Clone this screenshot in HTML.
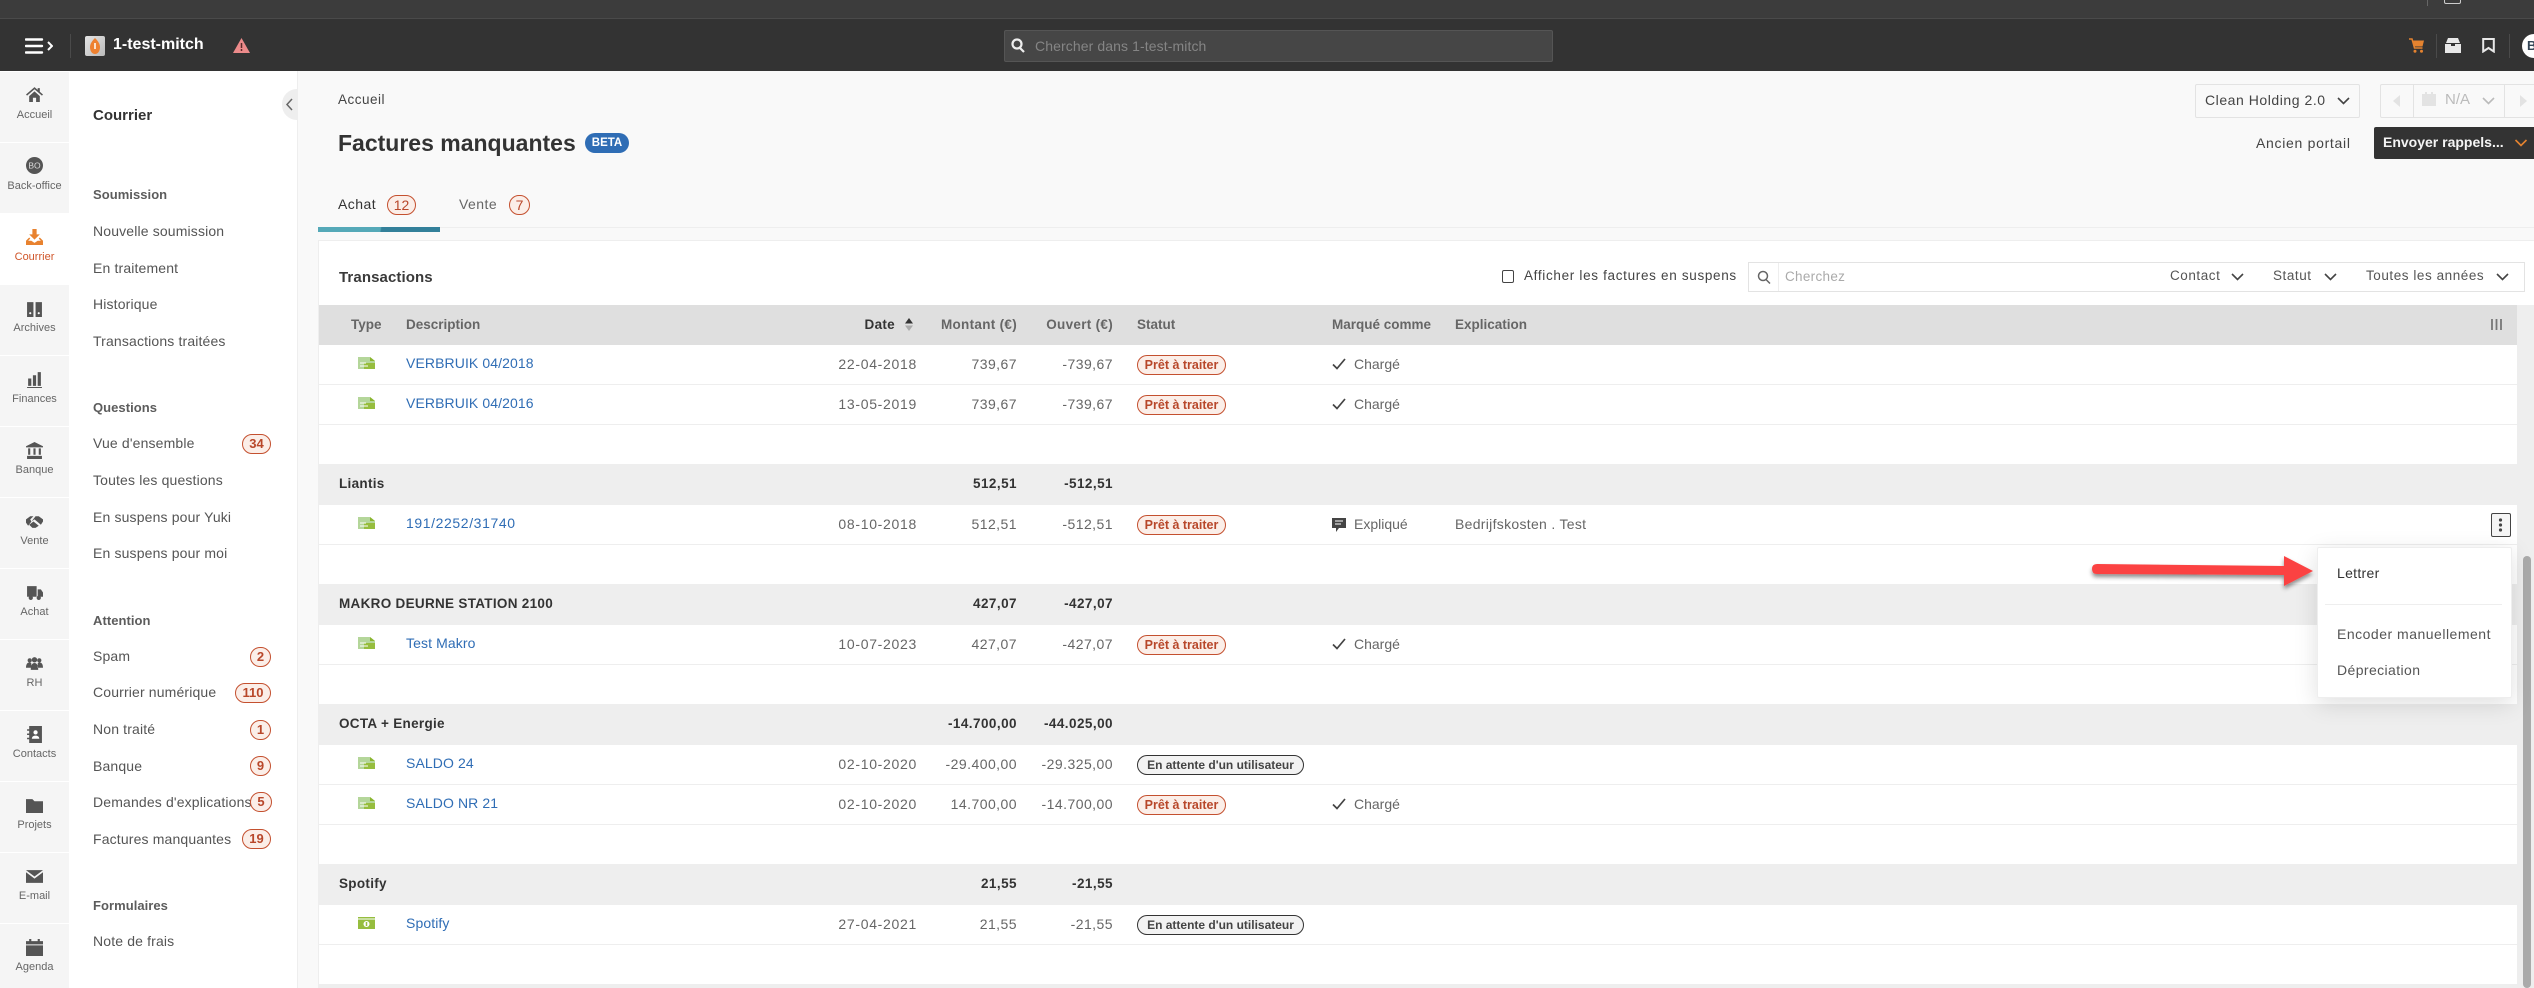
<!DOCTYPE html>
<html lang="fr"><head><meta charset="utf-8"><title>Factures manquantes</title>
<style>
html,body{margin:0;padding:0;width:2534px;height:988px;overflow:hidden;background:#f9f9f9}
body{position:relative;font-family:"Liberation Sans",sans-serif;font-size:14px;color:#555}
.a,.t,.r,.bd,svg{position:absolute}
.t,.r{white-space:nowrap;line-height:20px}
.r{text-align:right;width:160px}
.nav{position:absolute;left:0;width:69px;height:70px;background:#f5f5f5}
.nav span{position:absolute;left:0;width:69px;top:33px;text-align:center;font-size:11px;line-height:20px;color:#666}
.nav svg{left:26px;top:15px;width:17px;height:17px;fill:#555}
.m{left:93px;font-size:14px;letter-spacing:.15px;color:#555}
.s{left:93px;font-size:13px;font-weight:bold;color:#5c5c5c;letter-spacing:.05px}
.bd{height:18px;line-height:18px;border:1px solid #c4502f;border-radius:10px;background:#fbeee8;color:#b8472a;font-weight:bold;font-size:13px;text-align:center}
.h{font-size:13.5px;font-weight:bold;color:#666}
.r.h{letter-spacing:.3px}
.d{font-size:14px;letter-spacing:.1px;color:#2f6db5;left:406px}
.n{font-size:14px;color:#666}
.r.n{letter-spacing:.45px}
.r.dt{letter-spacing:.7px}
.g{font-size:13.5px;font-weight:bold;color:#333;letter-spacing:.3px}
.r.g{letter-spacing:.45px}
.f{font-size:13.5px;color:#555;letter-spacing:.55px}
.row{position:absolute;left:319px;width:2198px;height:1px;background:#eee}
.grp{position:absolute;left:319px;width:2198px;height:41px;background:#eee}
.st{position:absolute;left:1137px;width:87px;height:18px;line-height:18px;border:1px solid #c4502f;border-radius:10px;background:#fbeee8;color:#b8472a;font-weight:bold;font-size:12.5px;text-align:center;white-space:nowrap}
.st2{width:165px;border-color:#333;background:#f2f2f2;color:#444;font-size:12px}
.ic{width:17px;height:12px;left:358px}
.ck{left:1332px;width:14px;height:12px;fill:none;stroke:#444;stroke-width:1.7}
.ch{fill:none;stroke:#444;stroke-width:1.6;width:13px;height:8px}
</style></head><body>

<!-- top bars -->
<div class="a" style="left:0;top:0;width:2534px;height:18px;background:#3c3c3c"></div>
<div class="a" style="left:0;top:18px;width:2534px;height:1px;background:#4a4a4a"></div>
<div class="a" style="left:0;top:19px;width:2534px;height:52px;background:#333"></div>
<div class="a" style="left:2427px;top:0;width:1px;height:6px;background:#666"></div>
<div class="a" style="left:2444px;top:-8px;width:15px;height:10px;border:1px solid #ccc;border-radius:2px"></div>
<div class="a" style="left:2468px;top:0;width:66px;height:4px;overflow:hidden"><div class="t" style="top:-15px;left:0;color:#ccc;font-size:12px">Air bookmarks</div></div>

<svg style="left:25px;top:38px;width:28px;height:16px" viewBox="0 0 28 16"><path d="M1 1.5h16M1 8h16M1 14.500h16" stroke="#fff" stroke-width="2.4" stroke-linecap="round" fill="none"/><path d="M23 4l4 4-4 4" stroke="#fff" stroke-width="2" fill="none"/></svg>
<div class="a" style="left:70px;top:34px;width:1px;height:24px;background:#4a4a4a"></div>
<div class="a" style="left:85px;top:36px;width:20px;height:20px;border-radius:2px;background:linear-gradient(135deg,#e4e4e4,#bbb)"></div>
<svg style="left:90px;top:38px;width:10px;height:16px" viewBox="0 0 10 16"><path d="M5 0C8 3 10 6 10 9c0 4-2 7-5 7S0 13 0 9c0-3 2-6 5-9z" fill="#ee8130"/><path d="M5 5v6" stroke="#fff" stroke-width="1.5"/></svg>
<div class="t" style="left:113px;top:35px;color:#fff;font-weight:bold;font-size:16px">1-test-mitch</div>
<svg style="left:233px;top:38px;width:17px;height:15px" viewBox="0 0 17 15"><path d="M8.500 0L17 15H0z" fill="#ec8a8a"/><path d="M8.500 5v5M8.500 11v2" stroke="#5a2b2b" stroke-width="1.500"/></svg>

<div class="a" style="left:1004px;top:30px;width:547px;height:30px;background:#464646;border:1px solid #555;border-radius:2px"></div>
<svg style="left:1011px;top:38px;width:14px;height:15px" viewBox="0 0 14 15"><circle cx="6" cy="6" r="4.500" fill="none" stroke="#eee" stroke-width="2.200"/><path d="M9 10l4 4" stroke="#eee" stroke-width="2.200"/></svg>
<div class="t" style="left:1035px;top:36px;color:#858585;font-size:14px;letter-spacing:.1px">Chercher dans 1-test-mitch</div>

<svg style="left:2409px;top:38px;width:15px;height:15px" viewBox="0 0 15 15"><path d="M0 1h3l2.500 9h8" stroke="#e5832f" stroke-width="1.500" fill="none"/><path d="M4 2.500h11l-1.500 6H5.500z" fill="#e5832f"/><circle cx="6" cy="13.300" r="1.500" fill="#e5832f"/><circle cx="12.500" cy="13.300" r="1.500" fill="#e5832f"/></svg>
<div class="a" style="left:2436px;top:34px;width:1px;height:24px;background:#4a4a4a"></div>
<svg style="left:2445px;top:38px;width:16px;height:15px" viewBox="0 0 16 15"><path d="M1 5L3 0h10l2 5z" fill="#e8e8e8"/><path d="M0 6h6v2h4V6h6v9H0z" fill="#e8e8e8"/></svg>
<svg style="left:2482px;top:38px;width:13px;height:15px" viewBox="0 0 13 15"><path d="M1.200 1h10.600v12.500L6.500 10l-5.300 3.500z" fill="none" stroke="#e8e8e8" stroke-width="2"/></svg>
<div class="a" style="left:2509px;top:34px;width:1px;height:24px;background:#4a4a4a"></div>
<div class="a" style="left:2522px;top:34px;width:24px;height:24px;border-radius:50%;background:#fff"></div>
<div class="t" style="left:2527px;top:36px;color:#345;font-weight:bold;font-size:13px">B</div>

<!-- rail -->
<div class="a" style="left:0;top:71px;width:297px;height:917px;background:#fff"></div>
<div class="a" style="left:297px;top:71px;width:1px;height:917px;background:#eee"></div>

<div class="nav" style="top:72px"><svg viewBox="0 0 16 16" style="top:14px"><path d="M8 1L0 8l1 1 7-6 7 6 1-1-3-2.600V2h-2v1.700z"/><path d="M3 9.500L8 5l5 4.500V15H9.500v-4h-3v4H3z"/></svg><span>Accueil</span></div>
<div class="nav" style="top:143px"><svg viewBox="0 0 16 16" style="top:14px"><circle cx="8" cy="8" r="8"/><text x="8" y="11" text-anchor="middle" font-size="8" fill="#ddd" font-family="Liberation Sans">BO</text></svg><span>Back-office</span></div>
<div class="nav" style="top:214px;background:#fff;height:71px"><svg viewBox="0 0 16 16" style="top:15px;fill:#e8822f"><path d="M6 0h4v5h3L8 10 3 5h3z"/><path d="M3 8L0 11v4h16v-4l-3-3-1 1 2 2h-3l-3 2-3-2H2l2-2z"/></svg><span style="color:#d0562a">Courrier</span></div>
<div class="nav" style="top:285px"><svg viewBox="0 0 16 16" style="top:16px"><path d="M1 1h6v14H1zM9 1h6v14H9z"/><circle cx="4" cy="11.500" r="1" fill="#fff"/><circle cx="12" cy="11.500" r="1" fill="#fff"/></svg><span>Archives</span></div>
<div class="nav" style="top:356px"><svg viewBox="0 0 16 16"><path d="M2 7h3v7H2zM6.500 4h3v10h-3zM11 1h3v13h-3zM1 15h14v1H1z"/></svg><span>Finances</span></div>
<div class="nav" style="top:427px"><svg viewBox="0 0 16 16"><path d="M8 0l8 4v1H0V4zM2 6h2v6H2zM7 6h2v6H7zM12 6h2v6h-2zM1 13h14v3H1z"/></svg><span>Banque</span></div>
<div class="nav" style="top:498px"><svg viewBox="0 0 16 16"><path d="M0 6l4-3h3L4 6l1 2 3-2 6 5 2-3V6l-4-3H9L2 12 0 9z"/><path d="M3 11l3 3h3l3-2-5-4z"/></svg><span>Vente</span></div>
<div class="nav" style="top:569px"><svg viewBox="0 0 16 16"><path d="M1 2h9v10H1zM11 5h3l2 3v4h-5z"/><circle cx="4.500" cy="13" r="2"/><circle cx="12" cy="13" r="2"/></svg><span>Achat</span></div>
<div class="nav" style="top:640px"><svg viewBox="0 0 16 16"><circle cx="3.500" cy="5" r="2"/><circle cx="12.500" cy="5" r="2"/><circle cx="8" cy="4.500" r="2.500"/><path d="M0 12c0-3 1-5 3-5s2 1 2 1v4zM16 12c0-3-1-5-3-5s-2 1-2 1v4zM4.500 14c0-4 1-6.500 3.500-6.500s3.500 2.500 3.500 6.500z"/></svg><span>RH</span></div>
<div class="nav" style="top:711px"><svg viewBox="0 0 16 16"><path d="M3 0h12v16H3z"/><path d="M1 3h3v1.500H1zM1 7h3v1.500H1zM1 11h3v1.500H1z"/><circle cx="9" cy="6" r="2" fill="#fff"/><path d="M5.500 12c0-2 1.500-3 3.500-3s3.500 1 3.500 3z" fill="#fff"/></svg><span>Contacts</span></div>
<div class="nav" style="top:782px"><svg viewBox="0 0 16 16" style="width:19px;left:25px"><path d="M0 2h6l2 2h8v11H0z"/></svg><span>Projets</span></div>
<div class="nav" style="top:853px"><svg viewBox="0 0 16 16" style="width:19px;left:25px"><path d="M0 2h16L8 8zM0 4l8 6 8-6v10H0z"/></svg><span>E-mail</span></div>
<div class="nav" style="top:924px;height:64px"><svg viewBox="0 0 16 16" style="width:19px;left:25px"><path d="M3 0h2v2h6V0h2v2h3v3H0V2h3zM0 6h16v10H0z"/></svg><span>Agenda</span></div>

<!-- second sidebar -->
<div class="a" style="left:282px;top:89px;width:15px;height:31px;background:#eee;border-radius:16px 0 0 16px"></div>
<svg style="left:285px;top:98px;width:9px;height:13px" viewBox="0 0 9 13"><path d="M7 1L2 6.500 7 12" fill="none" stroke="#666" stroke-width="1.500"/></svg>
<div class="t" style="left:93px;top:106px;font-size:15px;font-weight:bold;color:#333">Courrier</div>

<div class="t s" style="top:185px">Soumission</div>
<div class="t m" style="top:221px">Nouvelle soumission</div>
<div class="t m" style="top:258px">En traitement</div>
<div class="t m" style="top:294px">Historique</div>
<div class="t m" style="top:331px">Transactions traitées</div>
<div class="t s" style="top:398px">Questions</div>
<div class="t m" style="top:433px">Vue d'ensemble</div>
<div class="bd" style="left:242px;top:434px;width:27px">34</div>
<div class="t m" style="top:470px">Toutes les questions</div>
<div class="t m" style="top:507px">En suspens pour Yuki</div>
<div class="t m" style="top:543px">En suspens pour moi</div>
<div class="t s" style="top:611px">Attention</div>
<div class="t m" style="top:646px">Spam</div>
<div class="bd" style="left:250px;top:647px;width:19px">2</div>
<div class="t m" style="top:682px">Courrier numérique</div>
<div class="bd" style="left:235px;top:683px;width:34px">110</div>
<div class="t m" style="top:719px">Non traité</div>
<div class="bd" style="left:250px;top:720px;width:19px">1</div>
<div class="t m" style="top:756px">Banque</div>
<div class="bd" style="left:250px;top:756px;width:19px">9</div>
<div class="t m" style="top:792px">Demandes d'explications</div>
<div class="bd" style="left:250px;top:792px;width:20px">5</div>
<div class="t m" style="top:829px">Factures manquantes</div>
<div class="bd" style="left:242px;top:829px;width:27px">19</div>
<div class="t s" style="top:896px">Formulaires</div>
<div class="t m" style="top:931px">Note de frais</div>

<!-- page head -->
<div class="t" style="left:338px;top:90px;font-size:13.5px;letter-spacing:.5px;color:#444">Accueil</div>
<div class="t" style="left:338px;top:130px;font-size:23px;line-height:26px;font-weight:bold;color:#333">Factures manquantes</div>
<div class="a" style="left:585px;top:133px;width:44px;height:20px;line-height:20px;border-radius:10px;background:#2f6db5;color:#fff;font-weight:bold;font-size:11.500px;text-align:center">BETA</div>

<div class="t" style="left:338px;top:194px;font-size:14px;letter-spacing:.45px;color:#333">Achat</div>
<div class="bd" style="left:387px;top:195px;width:27px;font-weight:normal;font-size:14px">12</div>
<div class="t" style="left:459px;top:194px;font-size:14px;letter-spacing:.45px;color:#666">Vente</div>
<div class="bd" style="left:509px;top:195px;width:19px;font-weight:normal;font-size:14px">7</div>
<div class="a" style="left:318px;top:227px;width:2216px;height:1px;background:#eee"></div>
<div class="a" style="left:318px;top:227px;width:122px;height:5px;background:linear-gradient(100deg,#55a9b8 0,#55a9b8 51%,#33809a 52%)"></div>

<!-- top right -->
<div class="a" style="left:2195px;top:84px;width:163px;height:32px;border:1px solid #e3e3e3;border-radius:2px;background:#f9f9f9"></div>
<div class="t" style="left:2205px;top:90px;font-size:14px;letter-spacing:.55px;color:#444">Clean Holding 2.0</div>
<svg class="ch" style="left:2337px;top:97px" viewBox="0 0 13 8"><path d="M1 1l5.500 5.500L12 1"/></svg>
<div class="a" style="left:2380px;top:84px;width:160px;height:32px;border:1px solid #e3e3e3;border-radius:2px"></div>
<div class="a" style="left:2413px;top:84px;width:1px;height:33px;background:#e3e3e3"></div>
<div class="a" style="left:2504px;top:84px;width:1px;height:33px;background:#e3e3e3"></div>
<svg style="left:2393px;top:95px;width:8px;height:12px" viewBox="0 0 8 12"><path d="M7 0v12L0 6z" fill="#e3e3e3"/></svg>
<svg style="left:2519px;top:95px;width:8px;height:12px" viewBox="0 0 8 12"><path d="M1 0v12l7-6z" fill="#e3e3e3"/></svg>
<svg style="left:2422px;top:92px;width:14px;height:14px" viewBox="0 0 14 14"><path d="M0 2h14v12H0zM3 0h2v2H3zM9 0h2v2H9z" fill="#e3e3e3"/></svg>
<div class="t" style="left:2445px;top:90px;font-size:15px;color:#bbb">N/A</div>
<svg class="ch" style="left:2482px;top:97px;stroke:#bbb" viewBox="0 0 13 8"><path d="M1 1l5.500 5.500L12 1"/></svg>
<div class="t" style="left:2256px;top:133px;font-size:14px;letter-spacing:.7px;color:#444">Ancien portail</div>
<div class="a" style="left:2374px;top:127px;width:170px;height:32px;background:#333;border-radius:2px"></div>
<div class="t" style="left:2383px;top:132px;font-size:14px;font-weight:bold;color:#f5f5f5">Envoyer rappels...</div>
<svg class="ch" style="left:2514px;top:139px;stroke:#e5832f;width:14px" viewBox="0 0 13 8"><path d="M1 1l5.500 5.500L12 1"/></svg>

<!-- panel -->
<div class="a" style="left:318px;top:240px;width:2216px;height:748px;background:#fff;border-top:1px solid #eee;border-left:1px solid #eee;box-sizing:border-box"></div>
<div class="a" style="left:2517px;top:305px;width:17px;height:683px;background:#eee"></div>
<div class="a" style="left:2523px;top:556px;width:8px;height:432px;background:#aaa;border-radius:4px"></div>
<div class="t" style="left:339px;top:268px;font-size:15px;letter-spacing:.1px;font-weight:bold;color:#3a3a3a">Transactions</div>

<div class="a" style="left:1502px;top:270px;width:10px;height:11px;border:1.600px solid #444;border-radius:2px"></div>
<div class="t" style="left:1524px;top:266px;font-size:13.500px;letter-spacing:.68px;color:#444">Afficher les factures en suspens</div>
<div class="a" style="left:1748px;top:262px;width:775px;height:28px;border:1px solid #e3e3e3;background:#fff"></div>
<div class="a" style="left:1778px;top:263px;width:1px;height:28px;background:#eee"></div>
<svg style="left:1757px;top:270px;width:14px;height:14px" viewBox="0 0 14 14"><circle cx="6" cy="6" r="4.500" fill="none" stroke="#666" stroke-width="1.500"/><path d="M9 9.500l4 4" stroke="#666" stroke-width="1.500"/></svg>
<div class="t" style="left:1785px;top:267px;font-size:13.500px;letter-spacing:.3px;color:#aaa">Cherchez</div>
<div class="t f" style="left:2170px;top:266px">Contact</div>
<svg class="ch" style="left:2231px;top:273px" viewBox="0 0 13 8"><path d="M1 1l5.500 5.500L12 1"/></svg>
<div class="t f" style="left:2273px;top:266px">Statut</div>
<svg class="ch" style="left:2324px;top:273px" viewBox="0 0 13 8"><path d="M1 1l5.500 5.500L12 1"/></svg>
<div class="t f" style="left:2366px;top:266px">Toutes les années</div>
<svg class="ch" style="left:2496px;top:273px" viewBox="0 0 13 8"><path d="M1 1l5.500 5.500L12 1"/></svg>

<!-- table head -->
<div class="a" style="left:319px;top:305px;width:2198px;height:40px;background:#dfdfdf"></div>
<div class="t h" style="left:351px;top:315px">Type</div>
<div class="t h" style="left:406px;top:315px">Description</div>
<div class="r h" style="left:735px;top:315px;color:#333">Date</div>
<svg style="left:905px;top:318px;width:8px;height:13px" viewBox="0 0 8 13"><path d="M4 0l4 5.500H0z" fill="#333"/><path d="M4 13L0 7.500h8z" fill="#aaa"/></svg>
<div class="r h" style="left:857px;top:315px">Montant (€)</div>
<div class="r h" style="left:953px;top:315px">Ouvert (€)</div>
<div class="t h" style="left:1137px;top:315px">Statut</div>
<div class="t h" style="left:1332px;top:315px">Marqué comme</div>
<div class="t h" style="left:1455px;top:315px">Explication</div>
<svg style="left:2491px;top:319px;width:11px;height:11px" viewBox="0 0 11 11"><path d="M1 0v11M5.500 0v11M10 0v11" stroke="#777" stroke-width="1.800"/></svg>

<!-- rows -->
<svg class="ic" style="top:357px" viewBox="0 0 17 12"><path d="M0 0h12l5 4v8H0z" fill="#b4d69a"/><path d="M6 6h11v6H6z" fill="#96bd3e"/><path d="M12 0l5 4h-5z" fill="#8ab52f"/><path d="M2 6h6M2 9h8" stroke="#fff" stroke-width="1"/></svg>
<div class="t d" style="top:353px">VERBRUIK 04/2018</div>
<div class="r n dt" style="left:757px;top:354px">22-04-2018</div>
<div class="r n" style="left:857px;top:354px">739,67</div>
<div class="r n" style="left:953px;top:354px">-739,67</div>
<div class="st" style="top:355px">Prêt à traiter</div>
<svg class="ck" style="top:358px" viewBox="0 0 14 12"><path d="M1 6.500l4 4L13 1"/></svg>
<div class="t n" style="left:1354px;top:354px">Chargé</div>
<div class="row" style="top:384px"></div>

<svg class="ic" style="top:397px" viewBox="0 0 17 12"><path d="M0 0h12l5 4v8H0z" fill="#b4d69a"/><path d="M6 6h11v6H6z" fill="#96bd3e"/><path d="M12 0l5 4h-5z" fill="#8ab52f"/><path d="M2 6h6M2 9h8" stroke="#fff" stroke-width="1"/></svg>
<div class="t d" style="top:393px">VERBRUIK 04/2016</div>
<div class="r n dt" style="left:757px;top:394px">13-05-2019</div>
<div class="r n" style="left:857px;top:394px">739,67</div>
<div class="r n" style="left:953px;top:394px">-739,67</div>
<div class="st" style="top:395px">Prêt à traiter</div>
<svg class="ck" style="top:398px" viewBox="0 0 14 12"><path d="M1 6.500l4 4L13 1"/></svg>
<div class="t n" style="left:1354px;top:394px">Chargé</div>
<div class="row" style="top:424px"></div>

<div class="grp" style="top:464px"></div>
<div class="t g" style="left:339px;top:474px">Liantis</div>
<div class="r g" style="left:857px;top:474px">512,51</div>
<div class="r g" style="left:953px;top:474px">-512,51</div>

<svg class="ic" style="top:517px" viewBox="0 0 17 12"><path d="M0 0h12l5 4v8H0z" fill="#b4d69a"/><path d="M6 6h11v6H6z" fill="#96bd3e"/><path d="M12 0l5 4h-5z" fill="#8ab52f"/><path d="M2 6h6M2 9h8" stroke="#fff" stroke-width="1"/></svg>
<div class="t d" style="top:513px;letter-spacing:.6px">191/2252/31740</div>
<div class="r n dt" style="left:757px;top:514px">08-10-2018</div>
<div class="r n" style="left:857px;top:514px">512,51</div>
<div class="r n" style="left:953px;top:514px">-512,51</div>
<div class="st" style="top:515px">Prêt à traiter</div>
<svg style="left:1332px;top:518px;width:14px;height:14px" viewBox="0 0 14 14"><path d="M0 0h14v10H7l-3 4v-4H0z" fill="#444"/><path d="M3 3h8M3 6h6" stroke="#fff"/></svg>
<div class="t n" style="left:1354px;top:514px">Expliqué</div>
<div class="t n" style="left:1455px;top:514px;letter-spacing:.3px">Bedrijfskosten . Test</div>
<div class="a" style="left:2491px;top:513px;width:18px;height:22px;border:1px solid #444;border-radius:2px;background:#f5f5f5"></div>
<svg style="left:2498px;top:518px;width:5px;height:14px" viewBox="0 0 5 14"><circle cx="2.500" cy="2" r="1.600" fill="#444"/><circle cx="2.500" cy="7" r="1.600" fill="#444"/><circle cx="2.500" cy="12" r="1.600" fill="#444"/></svg>
<div class="row" style="top:544px"></div>

<div class="grp" style="top:584px"></div>
<div class="t g" style="left:339px;top:594px">MAKRO DEURNE STATION 2100</div>
<div class="r g" style="left:857px;top:594px">427,07</div>
<div class="r g" style="left:953px;top:594px">-427,07</div>

<svg class="ic" style="top:637px" viewBox="0 0 17 12"><path d="M0 0h12l5 4v8H0z" fill="#b4d69a"/><path d="M6 6h11v6H6z" fill="#96bd3e"/><path d="M12 0l5 4h-5z" fill="#8ab52f"/><path d="M2 6h6M2 9h8" stroke="#fff" stroke-width="1"/></svg>
<div class="t d" style="top:633px">Test Makro</div>
<div class="r n dt" style="left:757px;top:634px">10-07-2023</div>
<div class="r n" style="left:857px;top:634px">427,07</div>
<div class="r n" style="left:953px;top:634px">-427,07</div>
<div class="st" style="top:635px">Prêt à traiter</div>
<svg class="ck" style="top:638px" viewBox="0 0 14 12"><path d="M1 6.500l4 4L13 1"/></svg>
<div class="t n" style="left:1354px;top:634px">Chargé</div>
<div class="row" style="top:664px"></div>

<div class="grp" style="top:704px"></div>
<div class="t g" style="left:339px;top:714px">OCTA + Energie</div>
<div class="r g" style="left:857px;top:714px">-14.700,00</div>
<div class="r g" style="left:953px;top:714px">-44.025,00</div>

<svg class="ic" style="top:757px" viewBox="0 0 17 12"><path d="M0 0h12l5 4v8H0z" fill="#b4d69a"/><path d="M6 6h11v6H6z" fill="#96bd3e"/><path d="M12 0l5 4h-5z" fill="#8ab52f"/><path d="M2 6h6M2 9h8" stroke="#fff" stroke-width="1"/></svg>
<div class="t d" style="top:753px">SALDO 24</div>
<div class="r n dt" style="left:757px;top:754px">02-10-2020</div>
<div class="r n" style="left:857px;top:754px">-29.400,00</div>
<div class="r n" style="left:953px;top:754px">-29.325,00</div>
<div class="st st2" style="top:755px">En attente d'un utilisateur</div>
<div class="row" style="top:784px"></div>

<svg class="ic" style="top:797px" viewBox="0 0 17 12"><path d="M0 0h12l5 4v8H0z" fill="#b4d69a"/><path d="M6 6h11v6H6z" fill="#96bd3e"/><path d="M12 0l5 4h-5z" fill="#8ab52f"/><path d="M2 6h6M2 9h8" stroke="#fff" stroke-width="1"/></svg>
<div class="t d" style="top:793px">SALDO NR 21</div>
<div class="r n dt" style="left:757px;top:794px">02-10-2020</div>
<div class="r n" style="left:857px;top:794px">14.700,00</div>
<div class="r n" style="left:953px;top:794px">-14.700,00</div>
<div class="st" style="top:795px">Prêt à traiter</div>
<svg class="ck" style="top:798px" viewBox="0 0 14 12"><path d="M1 6.500l4 4L13 1"/></svg>
<div class="t n" style="left:1354px;top:794px">Chargé</div>
<div class="row" style="top:824px"></div>

<div class="grp" style="top:864px"></div>
<div class="t g" style="left:339px;top:874px">Spotify</div>
<div class="r g" style="left:857px;top:874px">21,55</div>
<div class="r g" style="left:953px;top:874px">-21,55</div>

<svg class="ic" style="top:917px" viewBox="0 0 17 12"><path d="M0 0h17v12H0z" fill="#96bd3e"/><path d="M0 2h17" stroke="#dcebc4" stroke-width="1.500"/><circle cx="8.500" cy="7" r="3" fill="#fff"/><path d="M8.500 5v4" stroke="#96bd3e" stroke-width="1.500"/></svg>
<div class="t d" style="top:913px">Spotify</div>
<div class="r n dt" style="left:757px;top:914px">27-04-2021</div>
<div class="r n" style="left:857px;top:914px">21,55</div>
<div class="r n" style="left:953px;top:914px">-21,55</div>
<div class="st st2" style="top:915px">En attente d'un utilisateur</div>
<div class="row" style="top:944px"></div>
<div class="grp" style="top:984px;height:4px"></div>

<!-- dropdown -->
<div class="a" style="left:2317px;top:547px;width:193px;height:149px;background:#fff;border:1px solid #eee;border-radius:2px;box-shadow:0 6px 24px rgba(0,0,0,.13)"></div>
<div class="t" style="left:2337px;top:563px;font-size:14px;color:#333;letter-spacing:.3px">Lettrer</div>
<div class="a" style="left:2325px;top:604px;width:177px;height:1px;background:#eee"></div>
<div class="t" style="left:2337px;top:624px;font-size:14px;color:#555;letter-spacing:.5px">Encoder manuellement</div>
<div class="t" style="left:2337px;top:660px;font-size:14px;color:#555;letter-spacing:.4px">Dépreciation</div>

<!-- arrow -->
<svg style="left:2085px;top:550px;width:235px;height:46px;overflow:visible" viewBox="0 0 235 46">
<defs><filter id="sh" x="-10%" y="-50%" width="120%" height="200%"><feDropShadow dx="0" dy="3" stdDeviation="2" flood-color="#000" flood-opacity=".45"/></filter></defs>
<path d="M12 14L199 16V6L228 21 199 36V25L12 24Q7 24 7 19 7 14 12 14z" fill="#fb4242" filter="url(#sh)"/></svg>
</body></html>
